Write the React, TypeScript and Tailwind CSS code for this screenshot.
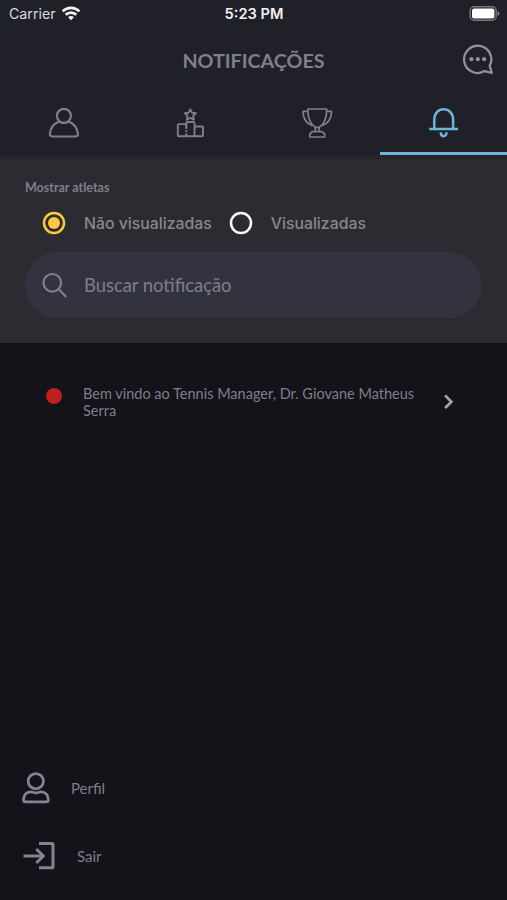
import { useState } from "react";

const TABS = [
  { id: "profile", label: "Perfil", Icon: PersonIcon },
  { id: "ranking", label: "Ranking", Icon: PodiumIcon },
  { id: "trophies", label: "Torneios", Icon: TrophyIcon },
  { id: "notifications", label: "Notificações", Icon: BellIcon },
];

function WifiIcon() {
  return (
    <svg width="20" height="15" viewBox="0 0 20 15" fill="none" stroke="#f4f4f6" strokeWidth="2.7">
      <path d="M1.6 5.4C6.4 0.7 13.6 0.7 18.4 5.4" />
      <path d="M4.7 8.8C7.7 5.9 12.3 5.9 15.3 8.8" />
      <path d="M10 14.2L7.1 11.2C8.7 9.7 11.3 9.7 12.9 11.2Z" fill="#f4f4f6" stroke="none" />
    </svg>
  );
}

function BatteryIcon() {
  return (
    <svg width="31" height="15" viewBox="0 0 31 15">
      <rect x="1.2" y="0.8" width="26" height="13.4" rx="4" fill="none" stroke="#77777d" strokeWidth="1.4" />
      <rect x="3" y="2.6" width="22.4" height="9.8" rx="2" fill="#fff" />
      <path d="M28.6 5.2c2.4 0.8 2.4 3.7 0 4.5z" fill="#8d8d93" />
    </svg>
  );
}

function ChatIcon() {
  return (
    <svg width="32" height="32" viewBox="0 0 32 32" fill="none" stroke="#918f9f" strokeWidth="2.3" strokeLinejoin="round">
      <path d="M22.6 28.1A13.6 13.6 0 1 1 27.7 22.8L29.8 29.8Z" />
      <g fill="#918f9f" stroke="none">
        <circle cx="9.4" cy="16.2" r="2.1" />
        <circle cx="15.8" cy="16.2" r="2.1" />
        <circle cx="22.1" cy="16.2" r="2.1" />
      </g>
    </svg>
  );
}

function PersonIcon() {
  return (
    <svg width="32" height="32" viewBox="0 0 32 32" fill="none" stroke="#7f7e8c" strokeWidth="2.2" strokeLinejoin="round">
      <circle cx="16.9" cy="8.8" r="7" />
      <path d="M12 14.6C7.2 16.8 3.4 21.2 2.9 26.6C2.7 28.5 3.8 29.5 5.6 29.5H28.2C30 29.5 31.1 28.5 30.9 26.6C30.2 21.2 26.6 16.8 21.8 14.6" />
      <path d="M12 14.6C15 16.3 18.8 16.3 21.8 14.6" />
    </svg>
  );
}

function PodiumIcon() {
  return (
    <svg width="32" height="32" viewBox="0 0 32 32" fill="none" stroke="#7f7e8c" strokeWidth="1.9" strokeLinejoin="round">
      <path d="M16.3 2.3L18 5.7L21.8 6.3L19.1 8.9L19.8 12.7L16.3 10.9L12.8 12.7L13.5 8.9L10.8 6.3L14.6 5.7Z" />
      <path d="M12.3 29.2H4.8Q3.8 29.2 3.8 28.2V18.1Q3.8 17.1 4.8 17.1H12.3" />
      <path d="M12.3 20.5V16.1Q12.3 15 13.4 15H19.4Q20.5 15 20.5 16.1V29.2H12.3" />
      <path d="M12.3 17V29.2" strokeDasharray="5 1.2 1.8 1.2" />
      <path d="M20.5 19.5H28Q29 19.5 29 20.5V28.2Q29 29.2 28 29.2H20.5" />
    </svg>
  );
}

function TrophyIcon() {
  return (
    <svg width="32" height="32" viewBox="0 0 32 32" fill="none" stroke="#7f7e8c" strokeWidth="1.7" strokeLinejoin="round">
      <path d="M6.8 2H25.7C25.7 11.5 23.3 17.2 18.2 20.3H14.3C9.2 17.2 6.8 11.5 6.8 2Z" />
      <path d="M6.9 4.4H1.9C2.2 11.8 4.8 16.5 11.4 18.6" />
      <path d="M25.6 4.4H30.6C30.3 11.8 27.7 16.5 21.1 18.6" />
      <path d="M14.3 20.3V24.6M18.2 20.3V24.6" />
      <path d="M8.8 30V27.3Q8.8 26.6 9.7 26.4L10.2 25.9Q10.5 24.6 11.8 24.6H20.7Q22 24.6 22.3 25.9L22.8 26.4Q23.7 26.6 23.7 27.3V30Z" />
    </svg>
  );
}

function BellIcon() {
  return (
    <svg width="32" height="32" viewBox="0 0 32 32" fill="none" stroke="#6bb5d6" strokeWidth="2.5">
      <path d="M6.3 22V12.3C6.3 6.5 10.3 2.2 15.7 2.2S25.1 6.5 25.1 12.3V22" />
      <path d="M1.2 22H30.1" />
      <path d="M12.8 25.3C12.8 30.6 18.6 30.6 18.6 25.3" />
    </svg>
  );
}

function SearchIcon() {
  return (
    <svg width="26" height="26" viewBox="0 0 26 26" fill="none" stroke="#7f7e8c" strokeWidth="2.2">
      <circle cx="10.3" cy="10.8" r="8.8" />
      <path d="M16.5 17L24.3 24.9" />
    </svg>
  );
}

function ProfileIcon() {
  return (
    <svg width="30" height="32" viewBox="0 0 30 32" fill="none" stroke="#858392" strokeWidth="2.8" strokeLinejoin="round">
      <circle cx="14.8" cy="9.2" r="7.6" />
      <path d="M9.4 19.8C5.2 20 2.6 23.4 2.5 28C2.5 29.2 3.2 29.9 4.5 29.9H25.3C26.6 29.9 27.3 29.2 27.3 28C27.2 23.4 24.6 20 20.4 19.8C18.2 19.7 17.5 20.9 14.9 20.9S11.6 19.7 9.4 19.8Z" />
    </svg>
  );
}

function ExitIcon() {
  return (
    <svg width="34" height="30" viewBox="0 0 34 30" fill="none" stroke="#858392" strokeWidth="3" strokeLinejoin="round">
      <path d="M17 2.4H30Q31 2.4 31 3.4V25.8Q31 26.8 30 26.8H17" />
      <path d="M1.5 15H22" />
      <path d="M14.3 8L21.5 15L14.3 22" />
    </svg>
  );
}

function Radio({ label, checked, onSelect }: { label: string; checked: boolean; onSelect: () => void }) {
  return (
    <button type="button" role="radio" aria-checked={checked} onClick={onSelect} className="flex items-center">
      <svg width="24" height="24" viewBox="0 0 24 24" fill="none" strokeWidth="2.5">
        <circle cx="12" cy="12" r="10" stroke={checked ? "#fbca3f" : "#f8f8fa"} />
        {checked && <circle cx="12" cy="12" r="6" fill="#fbca3f" />}
      </svg>
      <span className="ml-[18px] pt-px font-['Inter',sans-serif] text-[15.8px] leading-6 font-medium text-[#88878c]">
        {label}
      </span>
    </button>
  );
}

export default function App() {
  const [tab, setTab] = useState("notifications");
  const [seen, setSeen] = useState(false);

  return (
    <main className="flex h-[900px] w-[507px] flex-col overflow-hidden bg-[#131319] font-['Lato',sans-serif] text-[#7f7e8c]">
      <header className="h-[155px] bg-[#202029]">
        <div className="grid h-[27px] grid-cols-3 items-center pr-[7px] pl-[9px] font-['Inter',sans-serif] text-[14.2px] text-[#f4f4f6]">
          <div className="flex items-center gap-[5px]">
            <span className="text-[#d9d9dd]">Carrier</span>
            <WifiIcon />
          </div>
          <span className="pt-[2px] pr-px text-center text-[14.6px] font-semibold">5:23 PM</span>
          <div className="flex justify-end">
            <BatteryIcon />
          </div>
        </div>

        <div className="grid h-[66px] grid-cols-[1fr_auto_1fr] items-center px-[13px]">
          <h1 className="col-start-2 pt-[2px] text-[19.7px] font-bold">NOTIFICAÇÕES</h1>
          <button type="button" aria-label="Mensagens" className="justify-self-end pb-[2px]">
            <ChatIcon />
          </button>
        </div>

        <nav className="grid h-[62px] grid-cols-4">
          {TABS.map(({ id, label, Icon }) => (
            <button
              key={id}
              type="button"
              aria-label={label}
              onClick={() => setTab(id)}
              className={
                tab === id
                  ? "flex justify-center border-b-[3px] border-[#6bb5d6] pt-[14px]"
                  : "flex justify-center border-b-[3px] border-transparent pt-[14px]"
              }
            >
              <Icon />
            </button>
          ))}
        </nav>
      </header>

      <section className="h-[188px] bg-linear-to-b from-[#242429] to-[#2c2b31] to-[6px] px-[25px] pt-[24px]">
        <p className="text-[12.5px] leading-[18px] font-bold">Mostrar atletas</p>
        <div role="radiogroup" className="mt-[14px] flex h-6 items-center gap-[17px] pl-[17px]">
          <Radio label="Não visualizadas" checked={!seen} onSelect={() => setSeen(false)} />
          <Radio label="Visualizadas" checked={seen} onSelect={() => setSeen(true)} />
        </div>
        <label className="mt-[17px] flex h-[66px] items-center gap-[16px] rounded-full bg-[#33323f] pl-[17px]">
          <SearchIcon />
          <span className="pt-px text-[18.4px]">Buscar notificação</span>
        </label>
      </section>

      <ul className="flex-1 pt-[42px]">
        <li className="flex pl-[46px]">
          <span className="mt-[3px] size-[16px] rounded-full bg-[#bd1e1f]" />
          <p className="ml-[21px] w-[340px] text-[14.5px] leading-[17px]">
            Bem vindo ao Tennis Manager, Dr. Giovane Matheus Serra
          </p>
          <svg className="mt-[8px] ml-[19px]" width="14" height="18" viewBox="0 0 14 18" fill="none" stroke="#a3a2a8" strokeWidth="2.7">
            <path d="M3.1 2.4L9.4 8.7L3.1 15" />
          </svg>
        </li>
      </ul>

      <footer className="flex h-[129px] flex-col text-[15px]">
        <a href="#perfil" className="flex h-[34px] items-center gap-[20px] pl-[21px]">
          <ProfileIcon />
          <span>Perfil</span>
        </a>
        <a href="#sair" className="mt-[34px] flex h-[34px] items-center gap-[21px] pl-[22px]">
          <ExitIcon />
          <span>Sair</span>
        </a>
      </footer>
    </main>
  );
}
